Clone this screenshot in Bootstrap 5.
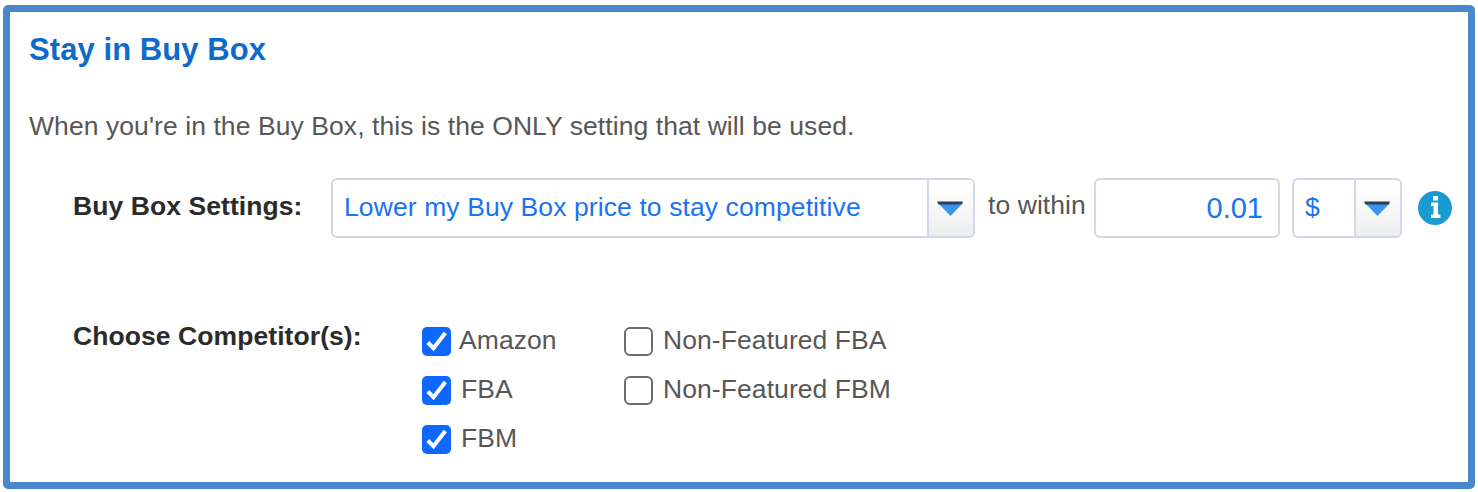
<!DOCTYPE html>
<html lang="en">
<head>
<meta charset="utf-8">
<meta name="viewport" content="width=device-width, initial-scale=1">
<title>Stay in Buy Box</title>
<link rel="stylesheet" href="https://cdn.jsdelivr.net/npm/bootstrap@5.3.0/dist/css/bootstrap.min.css">
<style>
body{font-family:"Liberation Sans",Arial,sans-serif;font-size:26.5px;line-height:30px;letter-spacing:.075px;color:#575757;background:#fff;white-space:nowrap;overflow:hidden}
.panel{margin:5px 3px 3px;height:484px;border:7px solid #4a87cb;border-radius:5px;padding:20px 16px 0 19px}
.panel-title{font-size:31px;line-height:36px;font-weight:700;color:#0f6bcb;margin:0 0 43px}
.intro{margin:0 0 37px;line-height:30px}
.field-label{font-weight:700;color:#2b2b2b}
.settings{margin-left:44px;height:60px}
.settings .field-label{width:258px;line-height:57px}
.box{height:60px;border:2px solid #d4d7e7;border-radius:6px;color:#1a73f0;background:#fff;padding:0;overflow:hidden;font-size:inherit;line-height:inherit;font-family:inherit}
.box-strategy{width:644px}
.box-amount{width:186px;font-size:29px;text-align:right;padding:0 15px 0 0}
.box-unit{width:110px;margin:0 16px 0 12px}
.box-value{padding-left:11px;line-height:54px}
.box-strategy .box-value{letter-spacing:.1px}
.box-arrow{width:46px;border-left:2px solid #d4d7e7;background:linear-gradient(#fff 10%,#eceeed)}
.within{width:119px;padding-left:13px;line-height:55px}
.info{margin-top:13px}
.competitors{margin:88px 0 0 44px}
.competitors .field-label{width:349px;margin-top:-5px}
.col-main{width:202px}
.option{height:49px;padding:0;margin:0;min-height:0}
.option .form-check-input{float:none;width:29px;height:29px;margin:1px 0 0;border:2px solid #6c6c6c;border-radius:6px;flex:none}
.option .form-check-input:checked{border:0;border-radius:5px;background:#0f68fe url("data:image/svg+xml,%3Csvg xmlns='http://www.w3.org/2000/svg' viewBox='0 0 29 29'%3E%3Cpath d='M5.800 15.500 11.500 21.300 23.300 6' fill='none' stroke='white' stroke-width='4'/%3E%3C/svg%3E") center/29px no-repeat}
.option .form-check-label{padding-left:10px;line-height:28px}
.option .label-tight{padding-left:8px}
</style>
</head>
<body>
<main class="panel">
  <h1 class="panel-title">Stay in Buy Box</h1>
  <p class="intro">When you're in the Buy Box, this is the ONLY setting that will be used.</p>

  <div class="settings d-flex align-items-start">
    <div class="field-label">Buy Box Settings:</div>
    <div class="box box-strategy d-flex">
      <span class="box-value flex-grow-1">Lower my Buy Box price to stay competitive</span>
      <span class="box-arrow d-flex"><svg width="44" height="56" viewBox="0 0 44 56"><path d="M9 23h25L21.500 36z" fill="#3b93f2"/><path d="M8 21.500h26l-1.500 3h-23z" fill="#2b4057"/></svg></span>
    </div>
    <span class="within">to within</span>
    <input class="form-control box box-amount" type="text" value="0.01" aria-label="Amount">
    <div class="box box-unit d-flex">
      <span class="box-value flex-grow-1">$</span>
      <span class="box-arrow d-flex"><svg width="44" height="56" viewBox="0 0 44 56"><path d="M9 23h25L21.500 36z" fill="#3b93f2"/><path d="M8 21.500h26l-1.500 3h-23z" fill="#2b4057"/></svg></span>
    </div>
    <svg class="info flex-shrink-0" width="34" height="34" viewBox="0 0 34 34"><circle cx="17" cy="17" r="17" fill="#1b9ad2"/><path d="M15 5h5v4.500h-5zM13 11.500h7v12h2.500V27H13v-3.500h2.500V15H13z" fill="#fff"/></svg>
  </div>

  <div class="competitors d-flex align-items-start">
    <div class="field-label">Choose Competitor(s):</div>
    <div class="col-main">
      <div class="form-check option d-flex"><input class="form-check-input" type="checkbox" id="amazon" checked><label class="form-check-label label-tight" for="amazon">Amazon</label></div>
      <div class="form-check option d-flex"><input class="form-check-input" type="checkbox" id="fba" checked><label class="form-check-label" for="fba">FBA</label></div>
      <div class="form-check option d-flex"><input class="form-check-input" type="checkbox" id="fbm" checked><label class="form-check-label" for="fbm">FBM</label></div>
    </div>
    <div>
      <div class="form-check option d-flex"><input class="form-check-input" type="checkbox" id="nf-fba"><label class="form-check-label" for="nf-fba">Non-Featured FBA</label></div>
      <div class="form-check option d-flex"><input class="form-check-input" type="checkbox" id="nf-fbm"><label class="form-check-label" for="nf-fbm">Non-Featured FBM</label></div>
    </div>
  </div>
</main>
<script src="https://cdn.jsdelivr.net/npm/bootstrap@5.3.0/dist/js/bootstrap.bundle.min.js"></script>
</body>
</html>
